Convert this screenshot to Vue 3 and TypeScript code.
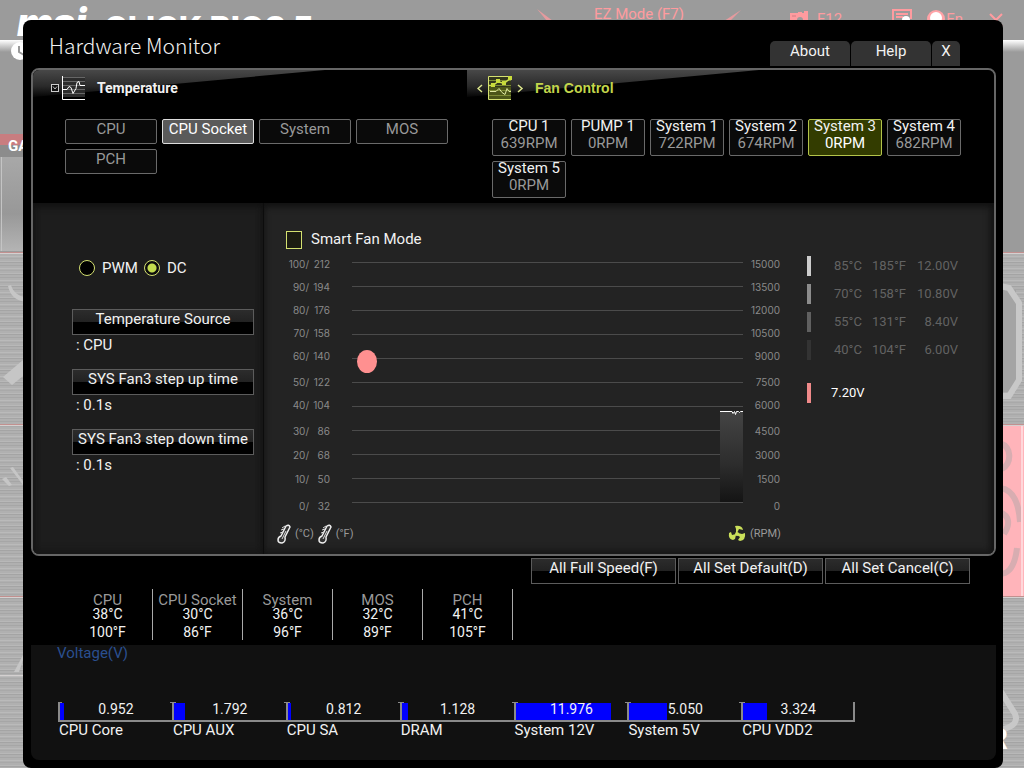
<script setup lang="ts">
import { ref } from 'vue'

interface Fan { name: string; rpm: number }
interface Reading { name: string; c: number; f: number }
interface Step { c: number; f: number; v: string; shade: string }
interface Gauge { name: string; value: string; fill: number }

const sensors: string[] = ['CPU', 'CPU Socket', 'System', 'MOS', 'PCH']
const activeSensor = ref<string>('CPU Socket')

const fans: Fan[] = [
  { name: 'CPU 1', rpm: 639 },
  { name: 'PUMP 1', rpm: 0 },
  { name: 'System 1', rpm: 722 },
  { name: 'System 2', rpm: 674 },
  { name: 'System 3', rpm: 0 },
  { name: 'System 4', rpm: 682 },
  { name: 'System 5', rpm: 0 },
]
const activeFan = ref<string>('System 3')

const mode = ref<'PWM' | 'DC'>('DC')
const smartFan = ref<boolean>(false)

const settings = [
  { label: 'Temperature Source', value: 'CPU' },
  { label: 'SYS Fan3 step up time', value: '0.1s' },
  { label: 'SYS Fan3 step down time', value: '0.1s' },
]

const tempAxis: [number, number][] = [
  [100, 212], [90, 194], [80, 176], [70, 158], [60, 140], [50, 122],
  [40, 104], [30, 86], [20, 68], [10, 50], [0, 32],
]
const rpmAxis: number[] = [15000, 13500, 12000, 10500, 9000, 7500, 6000, 4500, 3000, 1500, 0]

const steps: Step[] = [
  { c: 85, f: 185, v: '12.00V', shade: 's1' },
  { c: 70, f: 158, v: '10.80V', shade: 's2' },
  { c: 55, f: 131, v: '8.40V', shade: 's3' },
  { c: 40, f: 104, v: '6.00V', shade: 's4' },
]

const actions: string[] = ['All Full Speed(F)', 'All Set Default(D)', 'All Set Cancel(C)']

const readings: Reading[] = [
  { name: 'CPU', c: 38, f: 100 },
  { name: 'CPU Socket', c: 30, f: 86 },
  { name: 'System', c: 36, f: 96 },
  { name: 'MOS', c: 32, f: 89 },
  { name: 'PCH', c: 41, f: 105 },
]

const gauges: Gauge[] = [
  { name: 'CPU Core', value: '0.952', fill: 4 },
  { name: 'CPU AUX', value: '1.792', fill: 10 },
  { name: 'CPU SA', value: '0.812', fill: 3 },
  { name: 'DRAM', value: '1.128', fill: 6 },
  { name: 'System 12V', value: '11.976', fill: 85 },
  { name: 'System 5V', value: '5.050', fill: 34 },
  { name: 'CPU VDD2', value: '3.324', fill: 22 },
]
</script>

<template>
  <div class="screen">
    <div class="backdrop">
      <svg class="scene" viewBox="0 0 1024 768" preserveAspectRatio="xMidYMin slice" aria-hidden="true">
        <defs>
          <linearGradient id="shelf" x1="0" y1="0" x2="0" y2="1">
            <stop offset="0" stop-color="#fff" />
            <stop offset="1" stop-color="#9b9b9b" />
          </linearGradient>
          <linearGradient id="panelFade" x1="0" y1="0" x2="0" y2="1">
            <stop offset="0" stop-color="#a8a8a8" />
            <stop offset="0.6" stop-color="#989898" />
            <stop offset="1" stop-color="#b4b4b4" />
          </linearGradient>
          <pattern id="brushed" width="60" height="12" patternUnits="userSpaceOnUse">
            <rect width="60" height="12" fill="#b0b0b0" />
            <rect y="1" width="60" height="1" fill="#a6a6a6" />
            <rect y="4" width="60" height="1" fill="#bababa" />
            <rect y="6" width="60" height="1" fill="#a9a9a9" />
            <rect y="9" width="60" height="1" fill="#b8b8b8" />
            <rect y="10" width="60" height="1" fill="#a4a4a4" />
          </pattern>
        </defs>
        <rect width="1024" height="768" fill="#9b9b9b" />
        <rect y="40" width="1024" height="12" fill="url(#shelf)" />
        <circle cx="20" cy="51" r="9" fill="#fff" />
        <path d="M19 46v6l5 3" fill="none" stroke="#999" stroke-width="2" />
        <rect y="134" width="30" height="11" fill="#c87d80" />
        <rect y="145" width="30" height="12" fill="#8c8c8c" />
        <rect y="157" width="30" height="94" fill="url(#panelFade)" />
        <rect x="1" y="157" width="1" height="94" fill="#c4c4c4" />
        <rect y="252" width="1024" height="516" fill="url(#brushed)" />
        <g fill="#c6c6c6">
          <path d="M8 286c2 9 7 14 17 16v-5c-7-1-12-5-14-12z" />
          <path d="M3 377l20-17v16l-11 9z" />
          <path d="M2 479l4-2 6 8-3 1zM10 468l3-1 10 14v4z" />
          <path d="M14 672l9-17v5l-4 12z" />
        </g>
        <rect x="1000" y="290" width="16" height="102" fill="#a4a4a4" />
        <g fill="none" stroke="#c8c8c8" stroke-width="6">
          <path d="M1000 286l9 2 10 15v77l-10 16h-9" />
          <path d="M1000 690l15 24q5 12-15 16" />
        </g>
        <rect x="1000" y="424" width="24" height="172" fill="#ffb4ba" />
        <g fill="none" stroke="#d8adb1" stroke-width="6">
          <path d="M1000 443c12 4 12 20 2 26M1000 488q18 2 20 34M1000 512q14 6 4 22M1000 574q14 0 17-26" />
        </g>
        <rect x="1021" y="424" width="2" height="172" fill="#ffd7da" />
        <g stroke="#c2908f">
          <path d="M0 252.500h1024M0 424.500h1024M0 596.500h1024" />
        </g>
        <path d="M0 253.500h1024M0 425.500h1024M0 597.500h1024M0 675.500h30" stroke="#d4d0d0" />
        <path d="M537 9l16 12h-6zM741 10l-17 11h6z" fill="#e49a9e" />
      </svg>
      <header class="bios-bar">
        <span class="brand">msi</span>
        <span class="product">CLICK BIOS 5</span>
        <button type="button" class="ez">EZ Mode (F7)</button>
        <button type="button" class="tool shot">
          <svg width="20" height="16" viewBox="0 0 20 16" aria-hidden="true">
            <path d="M1 3h8V2h4v1h2V1h4v14H1z" fill="#ff9b9f" />
            <path d="M3 6h4" stroke="#d07f84" />
            <circle cx="11" cy="10" r="3" fill="#9b9b9b" />
          </svg>
          <span>F12</span>
        </button>
        <button type="button" class="tool find" aria-label="Search">
          <svg width="21" height="16" viewBox="0 0 21 16" aria-hidden="true">
            <path d="M1 15V1h18v9M4 5h12M4 8h7" fill="none" stroke="#ff9b9f" stroke-width="2" />
            <circle cx="14" cy="11" r="4" fill="#fff" />
          </svg>
        </button>
        <button type="button" class="tool lang">
          <svg width="18" height="18" viewBox="0 0 18 18" aria-hidden="true">
            <circle cx="9" cy="9" r="9" fill="#ffa3a7" />
            <circle cx="9" cy="8" r="6" fill="#fff" />
          </svg>
          <span>En</span>
        </button>
        <button type="button" class="tool quit" aria-label="Exit">
          <svg width="14" height="14" viewBox="0 0 14 14" aria-hidden="true">
            <path d="M1 1l12 12M13 1L1 13" stroke="#ff9b9f" stroke-width="2" />
          </svg>
        </button>
      </header>
      <span class="tag-left">GA</span>
      <span class="tag-right">R</span>
    </div>

    <main class="window">
      <header class="title-bar">
        <h1>Hardware Monitor</h1>
        <nav class="tabs">
          <button type="button">About</button>
          <button type="button">Help</button>
          <button type="button" class="close">X</button>
        </nav>
      </header>

      <section class="panel">
        <div class="pickers">
          <section class="picker">
            <h2>
              <svg width="36" height="26" viewBox="0 0 36 26" aria-hidden="true">
                <rect x="1.500" y="9.500" width="7" height="7" fill="#111" stroke="#ccc" />
                <path d="M3 11.500l2 2.500 2-2.500" fill="none" stroke="#bbb" />
                <rect x="13" y="2" width="22" height="20" fill="#2c2c2c" />
                <path d="M13 2.500h22M13 6.500h22M13 10.500h22M13 14.500h22M13 18.500h22" stroke="#666" />
                <path d="M12.500 1v23.500H35" fill="none" stroke="#fff" />
                <path d="M13 14.500h4l2-3 2 1 2 6 3-5 1-6 2-1 1 4h5" fill="none" stroke="#fff" />
              </svg>
              <span>Temperature</span>
            </h2>
            <div class="chips">
              <button
                v-for="s in sensors" :key="s" type="button" class="chip"
                :class="{ on: s === activeSensor }" @click="activeSensor = s"
              >{{ s }}</button>
            </div>
          </section>
          <section class="picker fans">
            <h2>
              <svg width="48" height="26" viewBox="0 0 48 26" aria-hidden="true">
                <path d="M5 10l-4 3.500L5 17M41 10l4 3.500L41 17" fill="none" stroke="#dde78c" stroke-width="1.500" />
                <rect x="12" y="1" width="22" height="11" fill="#33371c" />
                <rect x="12" y="12" width="22" height="12" fill="#4c5618" />
                <path d="M12 5.500h22M12 10.500h22M12 15.500h22M12 20.500h22" stroke="#7c8a34" />
                <path d="M11.500 24.500V1.500H34M11.500 24.500H34" fill="none" stroke="#d4e070" />
                <path d="M12 10.500h4l5-4 6 2 6-5" fill="none" stroke="#d0e04e" stroke-width="1.500" />
                <path d="M14 8h4v4h-4zM19 4h4v4h-4zM25 6h4v4h-4zM31 1h4v4h-4z" fill="#c9dc3c" />
                <path d="M13 16.500h6l3-3 3 4 3 2 2-6 2 3h2" fill="none" stroke="#dfe8a0" />
              </svg>
              <span>Fan Control</span>
            </h2>
            <div class="chips">
              <button
                v-for="f in fans" :key="f.name" type="button" class="fan"
                :class="{ on: f.name === activeFan }" @click="activeFan = f.name"
              >
                <span>{{ f.name }}</span>
                <span class="rpm">{{ f.rpm }}RPM</span>
              </button>
            </div>
          </section>
        </div>

        <div class="details">
          <aside class="side">
            <div class="modes">
              <label><input v-model="mode" type="radio" name="mode" value="PWM">PWM</label>
              <label><input v-model="mode" type="radio" name="mode" value="DC">DC</label>
            </div>
            <div v-for="s in settings" :key="s.label" class="setting">
              <button type="button" class="bevel">{{ s.label }}</button>
              <span>: {{ s.value }}</span>
            </div>
          </aside>

          <div class="curve">
            <div class="chart">
              <label class="smart"><input v-model="smartFan" type="checkbox"><span>Smart Fan Mode</span></label>
              <div class="graph">
                <div class="axis temps">
                  <div v-for="[c, f] in tempAxis" :key="c"><span>{{ c }}/</span><span>{{ f }}</span></div>
                </div>
                <div class="plot">
                  <span class="handle"></span>
                  <div class="trace">
                    <svg width="23" height="6" viewBox="0 0 23 6" aria-hidden="true">
                      <path d="M0 1.500h12l1 2 1.500-2 1 3 1-3h2l1 1 1-1H23" fill="none" stroke="#fff" />
                    </svg>
                  </div>
                </div>
                <div class="axis rpms">
                  <div v-for="r in rpmAxis" :key="r">{{ r }}</div>
                </div>
              </div>
              <div class="units">
                <svg width="14" height="20" viewBox="0 0 14 20" aria-hidden="true">
                  <path d="M9 2q3-2 4 1L8 13q1 5-3 6-4 0-4-3 0-3 3-4z" fill="#333" stroke="#eee" stroke-width="1.500" />
                  <path d="M9 7l-4 8M8 2L5 4M7 5L4 6M6 8L3 9" fill="none" stroke="#ddd" />
                </svg>
                <span>(°C)</span>
                <svg width="14" height="20" viewBox="0 0 14 20" aria-hidden="true">
                  <path d="M9 2q3-2 4 1L8 13q1 5-3 6-4 0-4-3 0-3 3-4z" fill="#333" stroke="#eee" stroke-width="1.500" />
                  <path d="M9 7l-4 8M8 2L5 4M7 5L4 6M6 8L3 9" fill="none" stroke="#ddd" />
                </svg>
                <span>(°F)</span>
                <svg class="fan-icon" width="18" height="18" viewBox="0 0 18 18" aria-hidden="true">
                  <g fill="#cbe05a">
                    <path d="M8 8V4L7 1q7-1 8 4l-4-1-2 4z" />
                    <path d="M10 8l4 1 3-1q1 7-5 8l-2-1 2-3-3-2z" />
                    <path d="M8 10l-1 4-2 1Q0 14 1 8l2-1 1 3 4-1z" />
                    <circle cx="9" cy="9" r="2" />
                  </g>
                </svg>
                <span>(RPM)</span>
              </div>
            </div>

            <div class="legend">
              <div v-for="s in steps" :key="s.c" class="step">
                <i :class="s.shade"></i>
                <span>{{ s.c }}°C</span>
                <span>{{ s.f }}°F</span>
                <span class="volts">{{ s.v }}</span>
              </div>
              <div class="step current">
                <i class="now"></i>
                <span>7.20V</span>
              </div>
            </div>
          </div>
        </div>
      </section>

      <div class="actions">
        <button v-for="a in actions" :key="a" type="button" class="bevel">{{ a }}</button>
      </div>

      <div class="readings">
        <div v-for="r in readings" :key="r.name" class="reading">
          <span class="name">{{ r.name }}</span>
          <span>{{ r.c }}°C</span>
          <span class="fahr">{{ r.f }}°F</span>
        </div>
      </div>

      <section class="voltage">
        <h3>Voltage(V)</h3>
        <div class="gauges">
          <div v-for="g in gauges" :key="g.name" class="gauge">
            <div class="track">
              <span class="fill" :style="{ width: g.fill + '%' }"></span>
              <span class="value">{{ g.value }}</span>
            </div>
            <span class="name">{{ g.name }}</span>
          </div>
        </div>
      </section>
    </main>
  </div>
</template>

<style>
body {
  margin: 0;
  background: #9b9b9b;
}
</style>

<style scoped>
.screen {
  position: relative;
  box-sizing: border-box;
  min-height: 100vh;
  padding: 20px 21px 0 23px;
  display: flex;
  overflow: hidden;
  font-family: Roboto, "Noto Sans", sans-serif;
  font-size: 15px;
  line-height: 18px;
  color: #f2f2f2;
}
.screen *, .screen *::before {
  box-sizing: border-box;
}
button {
  margin: 0;
  padding: 0;
  border: 0;
  background: none;
  color: inherit;
  font: inherit;
  white-space: nowrap;
}
h1, h2, h3 {
  margin: 0;
  font-weight: 400;
}

/* BIOS screen behind the window */
.backdrop {
  position: absolute;
  inset: 0;
}
.scene {
  position: absolute;
  width: 100%;
  height: 100%;
}
.bios-bar {
  position: relative;
  display: flex;
  align-items: flex-start;
  height: 40px;
  padding: 0 21px 0 17px;
  color: #ff9b9f;
}
.brand {
  width: 87px;
  padding-top: 4px;
  font: italic 900 38px/36px Inter, sans-serif;
  color: #fff;
}
.product {
  flex: 1;
  padding-top: 11px;
  font: 800 32px/36px Inter, sans-serif;
  color: #fff;
  white-space: nowrap;
}
.ez {
  padding-top: 5px;
  margin-right: 105px;
}
.tool {
  display: flex;
  gap: 8px;
  padding-top: 10px;
}
.shot {
  margin-right: 50px;
}
.find {
  margin-right: 14px;
  padding-top: 9px;
}
.lang {
  gap: 1px;
  margin-right: 26px;
}
.quit {
  padding-top: 13px;
}
.tag-left, .tag-right {
  position: absolute;
  color: #fff;
  font-weight: 700;
}
.tag-left {
  left: 8px;
  top: 137px;
}
.tag-right {
  right: 16px;
  bottom: 14px;
  font-size: 30px;
  line-height: 30px;
}

/* window */
.window {
  position: relative;
  flex: 1;
  min-width: 0;
  display: flex;
  flex-direction: column;
  padding: 0 7px 8px 8px;
  background: #000;
  border-radius: 8px;
}
.title-bar {
  display: flex;
  justify-content: space-between;
  align-items: flex-end;
  height: 48px;
  padding: 0 36px 0 18px;
}
h1 {
  font: 300 21px/46px "Noto Sans CJK SC", "Noto Sans", sans-serif;
}
.tabs {
  display: flex;
  gap: 1px;
  padding-bottom: 2px;
}
.tabs button {
  width: 80px;
  height: 25px;
  padding-bottom: 5px;
  background: #333;
  border-radius: 5px 5px 0 0;
}
.tabs .close {
  width: 28px;
}

.panel {
  border: 2px solid #666;
  border-radius: 8px;
  background: #222;
  overflow: hidden;
}
.pickers {
  display: grid;
  grid-template-columns: 434fr 527fr;
  min-height: 133px;
  background: #000;
}
.picker {
  position: relative;
  padding: 0 15px 5px 32px;
}
.picker::before {
  content: "";
  position: absolute;
  left: 0;
  top: 0;
  width: 292px;
  height: 27px;
  background: linear-gradient(#484848, #2a2a2a 60%, #050505);
  clip-path: polygon(0 0, 100% 0, 0 100%);
}
.fans {
  padding-left: 25px;
}
h2 {
  position: relative;
  display: flex;
  align-items: center;
  gap: 11px;
  height: 49px;
  padding-bottom: 13px;
  margin-left: -15px;
  font: 700 14px/18px Roboto, sans-serif;
}
.fans h2 {
  gap: 10px;
  color: #c3d64b;
  font-family: "Liberation Sans", Arial, sans-serif;
}
.chips {
  display: flex;
  flex-wrap: wrap;
  gap: 5px;
}
.chip {
  width: 92px;
  height: 25px;
  padding-bottom: 5px;
  border: 1px solid #6a6a6a;
  border-radius: 2px;
  background: #0a0a0a;
  color: #999;
}
.chip.on {
  border-color: #ddd;
  background: #5a5a5a;
  color: #fff;
}
.fan {
  display: flex;
  flex-direction: column;
  align-items: center;
  width: 74px;
  height: 37px;
  padding-bottom: 4px;
  border: 1px solid #6a6a6a;
  border-radius: 2px;
  background: #0a0a0a;
}
.fan span {
  line-height: 18px;
}
.fan span:first-child {
  line-height: 12px;
}
.rpm {
  margin-top: 2px;
  color: #999;
}
.fan.on {
  border-color: #b4c44a;
  background: #333c00;
}
.fan.on .rpm {
  color: #fff;
}

.details {
  display: flex;
  min-height: 351px;
}
.side {
  flex: none;
  width: 231px;
  padding: 55px 9px 0 39px;
  border-right: 1px solid #0c0c0c;
  background: #1d1d1d;
  box-shadow: inset 0 4px 6px #111, inset 0 -4px 6px #181818;
}
.modes {
  display: flex;
  gap: 6px;
  height: 51px;
  padding-left: 7px;
}
.modes label, .smart {
  display: flex;
  align-items: center;
}
.modes label {
  height: 20px;
  gap: 7px;
}
input {
  appearance: none;
  margin: 0;
  width: 16px;
  height: 16px;
  border: 1px solid #d4e070;
  background: #0c0c0c;
}
input[type="radio"] {
  border-radius: 50%;
  background: #000;
}
input[type="radio"]:checked {
  background: radial-gradient(circle, #c3dc4e 0 4px, #0c0c0c 5px);
}
input[type="checkbox"] {
  height: 18px;
  background: #1c1c12;
}
input[type="checkbox"]:checked {
  background: #c3dc4e;
}
.bevel {
  height: 26px;
  padding-bottom: 6px;
  border: 1px solid #5c5c5c;
  background: linear-gradient(#2c2c2c, #222 50%, #000 50%);
}
.setting {
  display: flex;
  flex-direction: column;
  height: 60px;
}
.setting span {
  padding: 1px 4px;
}

.curve {
  flex: 1;
  display: flex;
  min-width: 0;
  background: #232323;
  box-shadow: inset 0 4px 6px #111, inset -4px -4px 6px #181818;
}
.chart {
  flex: 1;
  padding: 27px 0 0 13px;
}
.smart {
  width: 150px;
  height: 20px;
  gap: 9px;
  padding-left: 9px;
}
.smart span {
  padding-bottom: 2px;
}
.graph {
  display: flex;
  padding-top: 7px;
}
.axis {
  display: grid;
  grid-template-rows: 23px 23px 23px 23px 26px 23px 26px 24px 24px 27px 14px;
  font: 10px/14px Inter, sans-serif;
  color: #8a8a8a;
  text-align: right;
}
.temps {
  width: 53px;
}
.temps span {
  display: inline-block;
  width: 19px;
}
.temps span:first-child {
  width: 26px;
  padding-right: 2px;
}
.rpms {
  width: 37px;
}
.plot {
  position: relative;
  flex: 1;
  height: 241px;
  margin: 5px 0 0 22px;
  background: repeating-linear-gradient(#4b4b4b 0 1px, transparent 1px 24px);
}
.handle {
  position: absolute;
  left: 5px;
  top: 88px;
  width: 20px;
  height: 23px;
  border-radius: 50%;
  background: #ff9090;
}
.trace {
  position: absolute;
  right: 0;
  bottom: 1px;
  width: 23px;
  height: 92px;
  background: linear-gradient(transparent 2px, #444 2px, #2c2c2c 60%, #141414);
}
.trace svg {
  display: block;
}
.units {
  display: flex;
  align-items: center;
  gap: 4px;
  height: 20px;
  margin-top: 11px;
  font-size: 11px;
  color: #999;
}
.units .fan-icon {
  margin-left: auto;
}
.units span:last-child {
  width: 30px;
}

.legend {
  flex: none;
  width: 214px;
  padding: 53px 36px 0 27px;
  font-size: 13px;
  color: #626262;
}
.step {
  display: grid;
  grid-template-columns: 27px 38px 36px 1fr;
  align-items: center;
  height: 20px;
  margin-bottom: 8px;
}
.step i {
  width: 4px;
  height: 20px;
}
.step span {
  white-space: nowrap;
}
.step .volts {
  text-align: right;
}
.s1 { background: #ccc; }
.s2 { background: #8c8c8c; }
.s3 { background: #606060; }
.s4 { background: #333; }
.now { background: #f08a8a; }
.step.current {
  grid-template-columns: 24px 1fr;
  margin-top: 23px;
  color: #fff;
}

.actions {
  display: flex;
  justify-content: flex-end;
  gap: 2px;
  padding: 2px 26px 0 0;
}
.actions .bevel {
  width: 145px;
}

.readings {
  display: flex;
  height: 56px;
  margin-top: 5px;
  padding-left: 32px;
}
.reading {
  display: flex;
  flex-direction: column;
  align-items: center;
  width: 90px;
  height: 51px;
  border-right: 1px solid #aaa;
  font-size: 14px;
}
.reading span {
  line-height: 16px;
}
.reading .name {
  height: 17px;
  padding-top: 3px;
  font-size: 15px;
  color: #999;
}
.reading .fahr {
  line-height: 20px;
}

.voltage {
  flex: 1;
  padding: 0 0 0 26px;
  border-radius: 0 0 8px 8px;
  background: #111;
}
h3 {
  font-size: 15px;
  line-height: 17px;
  color: #2a4f8f;
}
.gauges {
  display: flex;
  width: 85%;
  padding: 40px 0 0 1px;
}
.gauge {
  flex: 1;
}
.track {
  position: relative;
  height: 20px;
  border: 2px solid #8a8a8a;
  border-width: 0 0 2px 2px;
}
.track::before {
  content: "";
  position: absolute;
  left: -4px;
  top: 0;
  width: 6px;
  height: 1px;
  background: #8a8a8a;
}
.gauge:first-child .track::before {
  left: -2px;
  width: 4px;
}
.gauge:last-child .track {
  border-right-width: 2px;
}
.fill {
  position: absolute;
  left: 0;
  top: 1px;
  bottom: 0;
  background: #00f;
}
.value {
  position: relative;
  display: block;
  text-align: center;
  font-size: 14px;
  line-height: 14px;
}
.gauge .name {
  display: block;
  padding-left: 1px;
  line-height: 16px;
}
</style>
